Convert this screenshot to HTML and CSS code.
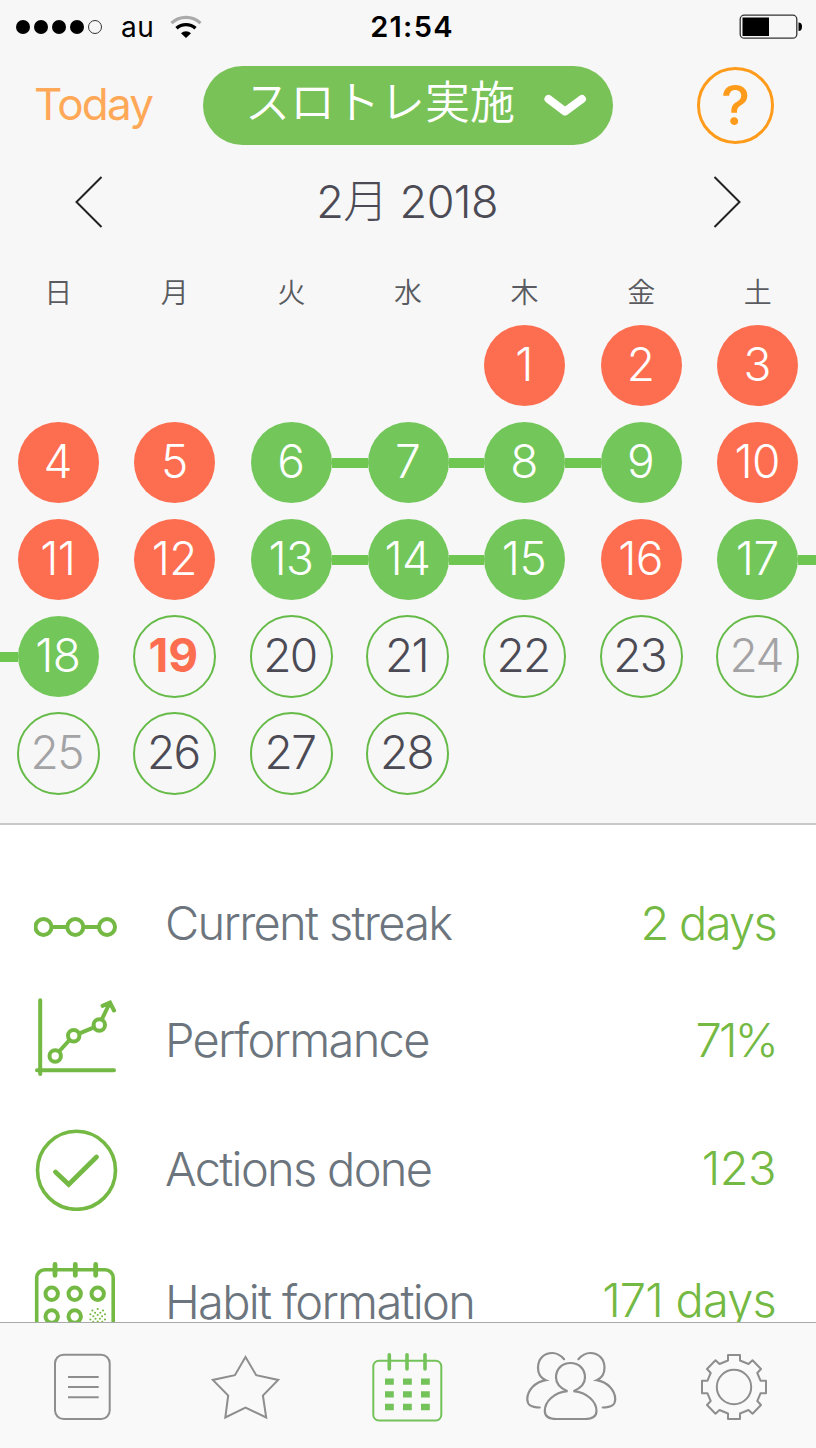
FILE: index.html
```html
<!DOCTYPE html>
<html lang="ja">
  <head>
    <title>スロトレ実施</title>
    <meta charset="utf-8">
    <link rel="stylesheet" href="styles.css">
  </head>
  <body>

  <div class="calendar-panel">

    <div class="statusbar">
      <div class="carrier">
        <span class="dot"></span>
        <span class="dot"></span>
        <span class="dot"></span>
        <span class="dot"></span>
        <span class="dot empty"></span>
        <span class="network">au</span>
        <svg class="wifi" width="32" height="24" viewBox="0 0 32 24" fill="none">
          <path d="M1.5 8.2 A21 21 0 0 1 30.500 8.2" stroke="#aaa" stroke-width="3.200"/>
          <path d="M6.500 13.300 A14 14 0 0 1 25.500 13.300" stroke="#000" stroke-width="3.400"/>
          <path d="M16 23 L11 18.300 A7 7 0 0 1 21 18.300 Z" fill="#000"/>
        </svg>
      </div>
      <div class="clock">21:54</div>
      <svg class="battery" width="64" height="26" viewBox="0 0 64 26">
        <rect x="1.200" y="1.200" width="56.600" height="23" rx="4" fill="none" stroke="#333" stroke-width="1.300"/>
        <rect x="3.500" y="3.500" width="26.500" height="18.500" fill="#000"/>
        <path d="M59.500 8.500 Q63 8.500 63 12.500 Q63 17 59.500 17 Z" fill="#000"/>
      </svg>
    </div>

    <div class="header">
      <a class="today">Today</a>
      <div class="habit">
        <span>スロトレ実施</span>
        <svg width="44" height="26" viewBox="0 0 44 26" fill="none">
          <path d="M4.500 6 L21 18.500 L38 6" stroke="#fff" stroke-width="8" stroke-linecap="round" stroke-linejoin="round"/>
        </svg>
      </div>
      <div class="help">?</div>
    </div>

    <div class="month">
      <svg width="30" height="54" viewBox="0 0 30 54" fill="none" stroke="#222" stroke-width="2">
        <path d="M27.500 2 L2.500 27 L27.500 52"/>
      </svg>
      <div class="month-name">2月 2018</div>
      <svg width="30" height="54" viewBox="0 0 30 54" fill="none" stroke="#222" stroke-width="2">
        <path d="M2.500 2 L27.500 27 L2.500 52"/>
      </svg>
    </div>

    <div class="weekdays">
      <span>日</span><span>月</span><span>火</span><span>水</span><span>木</span><span>金</span><span>土</span>
    </div>

    <div class="days">
      <div class="day"></div>
      <div class="day"></div>
      <div class="day"></div>
      <div class="day"></div>
      <div class="day missed"><span>1</span></div>
      <div class="day missed"><span>2</span></div>
      <div class="day missed"><span>3</span></div>

      <div class="day missed"><span>4</span></div>
      <div class="day missed"><span>5</span></div>
      <div class="day done next"><span>6</span></div>
      <div class="day done prev next"><span>7</span></div>
      <div class="day done prev next"><span>8</span></div>
      <div class="day done prev"><span>9</span></div>
      <div class="day missed"><span>10</span></div>

      <div class="day missed"><span>11</span></div>
      <div class="day missed"><span>12</span></div>
      <div class="day done next"><span>13</span></div>
      <div class="day done prev next"><span>14</span></div>
      <div class="day done prev"><span>15</span></div>
      <div class="day missed"><span>16</span></div>
      <div class="day done next"><span>17</span></div>

      <div class="day done prev"><span>18</span></div>
      <div class="day open current"><span>19</span></div>
      <div class="day open"><span>20</span></div>
      <div class="day open"><span>21</span></div>
      <div class="day open"><span>22</span></div>
      <div class="day open"><span>23</span></div>
      <div class="day open off"><span>24</span></div>

      <div class="day open off"><span>25</span></div>
      <div class="day open"><span>26</span></div>
      <div class="day open"><span>27</span></div>
      <div class="day open"><span>28</span></div>
    </div>
  </div>

  <div class="stats">
    <div class="stat">
      <svg width="84" height="84" viewBox="0 0 84 84" fill="none" stroke="#74b943" stroke-width="4">
        <path d="M18 46 H33 M50 46 H65"/>
        <circle cx="9.500" cy="46" r="8"/>
        <circle cx="41.300" cy="46" r="8"/>
        <circle cx="73" cy="46" r="8"/>
      </svg>
      <span class="label">Current streak</span>
      <span class="value">2 days</span>
    </div>
    <div class="stat">
      <svg width="84" height="84" viewBox="0 0 84 84" fill="none" stroke="#74b943" stroke-width="4" stroke-linecap="round">
        <path d="M6.200 2.300 V76 M3 72.300 H80"/>
        <circle cx="21.200" cy="58" r="5.700"/>
        <circle cx="39.700" cy="37.700" r="5.700"/>
        <circle cx="65.300" cy="27" r="5.700"/>
        <path d="M25.500 53 L35.500 42 M45.500 35.300 L60 29.300 M68 21 L76 4.500 M68.500 7.800 L76 4.500 L80 12.500"/>
      </svg>
      <span class="label">Performance</span>
      <span class="value percent">71%</span>
    </div>
    <div class="stat">
      <svg width="84" height="84" viewBox="0 0 84 84" fill="none" stroke="#74b943" stroke-linecap="round">
        <circle cx="42.500" cy="43.300" r="39" stroke-width="3.600"/>
        <path d="M21.500 45 L34.700 57.500 L62.500 30" stroke-width="4.800"/>
      </svg>
      <span class="label">Actions done</span>
      <span class="value raised count">123</span>
    </div>
    <div class="stat">
      <svg width="84" height="84" viewBox="0 0 84 84" fill="none" stroke="#74b943" stroke-width="4">
        <rect x="2.700" y="9.800" width="76.500" height="72" rx="8" stroke-width="3.600"/>
        <path d="M21 4.500 V15.300 M41.300 4.500 V15.300 M61.700 4.500 V15.300" stroke-width="4.800" stroke-linecap="round"/>
        <circle cx="17.700" cy="33.800" r="6.200"/>
        <circle cx="40.700" cy="33.800" r="6.200"/>
        <circle cx="63.700" cy="33.800" r="6.200"/>
        <circle cx="17.700" cy="56.500" r="6.200"/>
        <circle cx="40.700" cy="56.500" r="6.200"/>
        <!-- dotted day -->
        <path transform="translate(63.700 56.500)" stroke-width="2.100" stroke-linecap="round" d="M0 -7.500 h.01 M-5.300 -6 h.01 M5.300 -6 h.01 M-2.600 -3.800 h.01 M2.600 -3.800 h.01 M-7.300 -2.200 h.01 M7.300 -2.200 h.01 M0 -1.500 h.01 M-4.400 -.2 h.01 M4.400 -.2 h.01 M-2.200 2.200 h.01 M2.200 2.200 h.01 M-7.300 3 h.01 M7.300 3 h.01 M0 5 h.01 M-4.500 5.200 h.01 M4.500 5.200 h.01"/>
      </svg>
      <span class="label">Habit formation</span>
      <span class="value raised total">171 days</span>
    </div>
  </div>

  <div class="tabbar">
    <svg width="96" height="72" viewBox="0 0 96 72" fill="none" stroke="#8e8e8e" stroke-width="2">
      <rect x="21" y="4.700" width="54.700" height="64.300" rx="8.500"/>
      <path d="M34 27 H64.700 M34 37 H64.700 M34 47.300 H64.700"/>
    </svg>
    <svg width="96" height="72" viewBox="0 0 96 72" fill="none" stroke="#8e8e8e" stroke-width="2">
      <path d="M48.500 7 L59.200 25.200 L81.200 29.900 L65.900 45.500 L69.200 67.500 L48.500 57.500 L28.300 67.500 L31.200 45.500 L15.800 29.900 L37.900 25.200 Z"/>
    </svg>
    <svg width="96" height="72" viewBox="0 0 96 72" fill="none" stroke="#74c25a" stroke-width="2">
      <rect x="13.300" y="10.800" width="68" height="59.700" rx="5.500"/>
      <path d="M29.300 4.800 V19 M47 4.800 V19 M65 4.800 V19" stroke-width="3.600" stroke-linecap="round"/>
      <path d="M25 31.600 h8.800 m9.200 0 h8.800 m9.200 0 h8.800 M25 44.300 h8.800 m9.200 0 h8.800 m9.200 0 h8.800 M25 57 h8.800 m9.200 0 h8.800 m9.200 0 h8.800" stroke-width="6.300"/>
    </svg>
    <svg width="96" height="72" viewBox="0 0 96 72" fill="none" stroke="#8e8e8e" stroke-width="2.200" stroke-linecap="round">
      <path d="M44.500 41.200 C37 38 33 33 33 27.500 C33 18.500 39.500 13 47.500 13 C55.500 13 62 18.500 62 27.500 C62 33 58 38 50.500 41.200 C64 42.500 73.500 51.500 73.500 61 C73.500 66.500 69.500 69 62 69 H33.500 C25.500 69 21.800 66.500 21.800 61 C21.800 51.500 31 42.500 44.500 41.200 Z"/>
      <path d="M41.100 9.200 C37.500 5 33.500 3 29.300 3 C21 3 15 9 15 17.800 C15 24 17.500 28 22.800 30.200 C12 32 4.300 40.500 4.300 49.200 C4.300 55 7.500 57.500 16.800 57.500"/>
      <path transform="translate(96.500 0) scale(-1 1)" d="M41.100 9.200 C37.500 5 33.500 3 29.300 3 C21 3 15 9 15 17.800 C15 24 17.500 28 22.800 30.200 C12 32 4.300 40.500 4.300 49.200 C4.300 55 7.500 57.500 16.800 57.500"/>
    </svg>
    <svg width="96" height="72" viewBox="0 0 96 72" fill="none" stroke="#8e8e8e" stroke-width="2">
      <circle cx="48" cy="37" r="17.200"/>
      <path transform="translate(48 37)" d="M-6 -32 H6 V-26.500 L14.500 -23 L18.500 -26.700 L27 -18 L23.300 -14 L26.500 -6.300 H32 V6.300 H26.500 L23.300 14 L27 18 L18.500 26.700 L14.500 23 L6 26.500 V32 H-6 V26.500 L-14.500 23 L-18.500 26.700 L-27 18 L-23.300 14 L-26.500 6.300 H-32 V-6.300 H-26.500 L-23.300 -14 L-27 -18 L-18.500 -26.700 L-14.500 -23 L-6 -26.500 Z" stroke-linejoin="round"/>
    </svg>
  </div>

  </body>
</html>
```
FILE: styles.css
```css
* {
  box-sizing: border-box;
}

body {
  margin: 0;
  width: 816px;
  height: 1448px;
  display: flex;
  flex-direction: column;
  overflow: hidden;
  background: #fff;
  font-family: Inter, "Noto Sans CJK JP", sans-serif;
  font-weight: 300;
}

svg {
  display: block;
  flex: none;
}

.calendar-panel {
  flex: none;
  height: 825px;
  background: #f7f7f7;
  border-bottom: 2px solid #c8c8c8;
}

/* status bar */

.statusbar {
  display: grid;
  grid-template-columns: 1fr auto 1fr;
  align-items: center;
  height: 53px;
  padding: 0 13px 0 16px;
  color: #000;
}

.carrier {
  display: flex;
  align-items: center;
  gap: 4px;
}

.dot {
  width: 14px;
  height: 14px;
  border-radius: 50%;
  background: #000;
}

.dot.empty {
  background: none;
  border: 1px solid #333;
}

.network {
  margin: 0 12px 0 15px;
  font-size: 28px;
  line-height: 34px;
  font-weight: 400;
  letter-spacing: 0.5px;
}

.clock {
  font-size: 29px;
  line-height: 53px;
  font-weight: 600;
  letter-spacing: 1.3px;
  padding-left: 5px;
}

.battery {
  justify-self: end;
}

/* header */

.header {
  display: grid;
  grid-template-columns: 203px 410px 203px;
  align-items: center;
  height: 105px;
}

.today {
  padding: 0 0 4px 34px;
  color: #ffa857;
  font-size: 44px;
  line-height: 50px;
  font-weight: 400;
  letter-spacing: -1.8px;
}

.habit {
  display: flex;
  align-items: center;
  justify-content: space-between;
  height: 79px;
  padding: 0 25px 0 42px;
  border-radius: 40px;
  background: #78c257;
  color: #fff;
  font-size: 45px;
  line-height: 50px;
  font-weight: 350;
}

.habit span {
  padding-bottom: 5px;
}

.help {
  justify-self: end;
  width: 77px;
  height: 77px;
  margin-right: 42px;
  border: 3.500px solid #ff9b1a;
  border-radius: 50%;
  color: #ff9b1a;
  font-size: 55px;
  line-height: 71px;
  font-weight: 500;
  text-align: center;
}

.month {
  display: flex;
  align-items: center;
  justify-content: space-between;
  height: 87px;
  padding: 0 74px;
  color: #4c4b55;
}

.month-name {
  padding: 1px 2px 0 0;
  font-size: 45px;
  line-height: 50px;
  letter-spacing: -0.6px;
}

.weekdays {
  display: grid;
  grid-template-columns: repeat(7, 1fr);
  height: 72px;
  padding-top: 28px;
  color: #5a5b60;
  font-size: 28px;
  line-height: 41px;
  font-weight: 350;
  text-align: center;
}

/* calendar grid */

.days {
  display: grid;
  grid-template-columns: repeat(7, 1fr);
  grid-auto-rows: 97px;
}

.day {
  display: flex;
  align-items: center;
  justify-content: center;
  color: #4c4b55;
}

.day span {
  width: 81px;
  height: 81px;
  padding-right: 1px;
  border-radius: 50%;
  font-size: 46px;
  line-height: 79px;
  letter-spacing: -0.5px;
  text-align: center;
}

.missed span {
  background: #fd6e51;
  color: #fff;
}

.done span {
  background: #73c75a;
  color: #fff;
}

.open span {
  width: 83px;
  height: 83px;
  padding-right: 3px;
  border: 2px solid #66bb48;
  line-height: 77px;
  letter-spacing: -1.6px;
}

.current span {
  color: #fd6e51;
  font-weight: 700;
  letter-spacing: 0;
}

.off span {
  color: #a3a3a5;
}

/* streak line between done days */

.done::before,
.done::after {
  content: "";
  flex: 1;
  height: 10px;
}

.done.prev::before,
.done.next::after {
  background: #6fc651;
}

/* stats */

.stats {
  flex: 1;
  display: grid;
  grid-template-rows: 126px 108px 150px 115px;
  padding: 35px 40px 0 34px;
  overflow: hidden;
  min-height: 0;
}

.stat {
  display: flex;
  align-items: center;
  font-size: 47px;
  line-height: 60px;
  letter-spacing: -1.7px;
}

.label {
  flex: 1;
  padding-left: 47px;
  color: #6c757d;
}

.value {
  color: #74b943;
}

.value.raised {
  padding-bottom: 3px;
}

.value.percent {
  letter-spacing: -2.8px;
}

.value.count {
  letter-spacing: -0.5px;
}

.value.total {
  letter-spacing: -0.8px;
}

/* tab bar */

.tabbar {
  flex: none;
  display: grid;
  grid-template-columns: repeat(5, 1fr);
  align-items: center;
  justify-items: center;
  height: 126px;
  border-top: 1px solid #a9a9a9;
  background: #f9f9f9;
}
```
